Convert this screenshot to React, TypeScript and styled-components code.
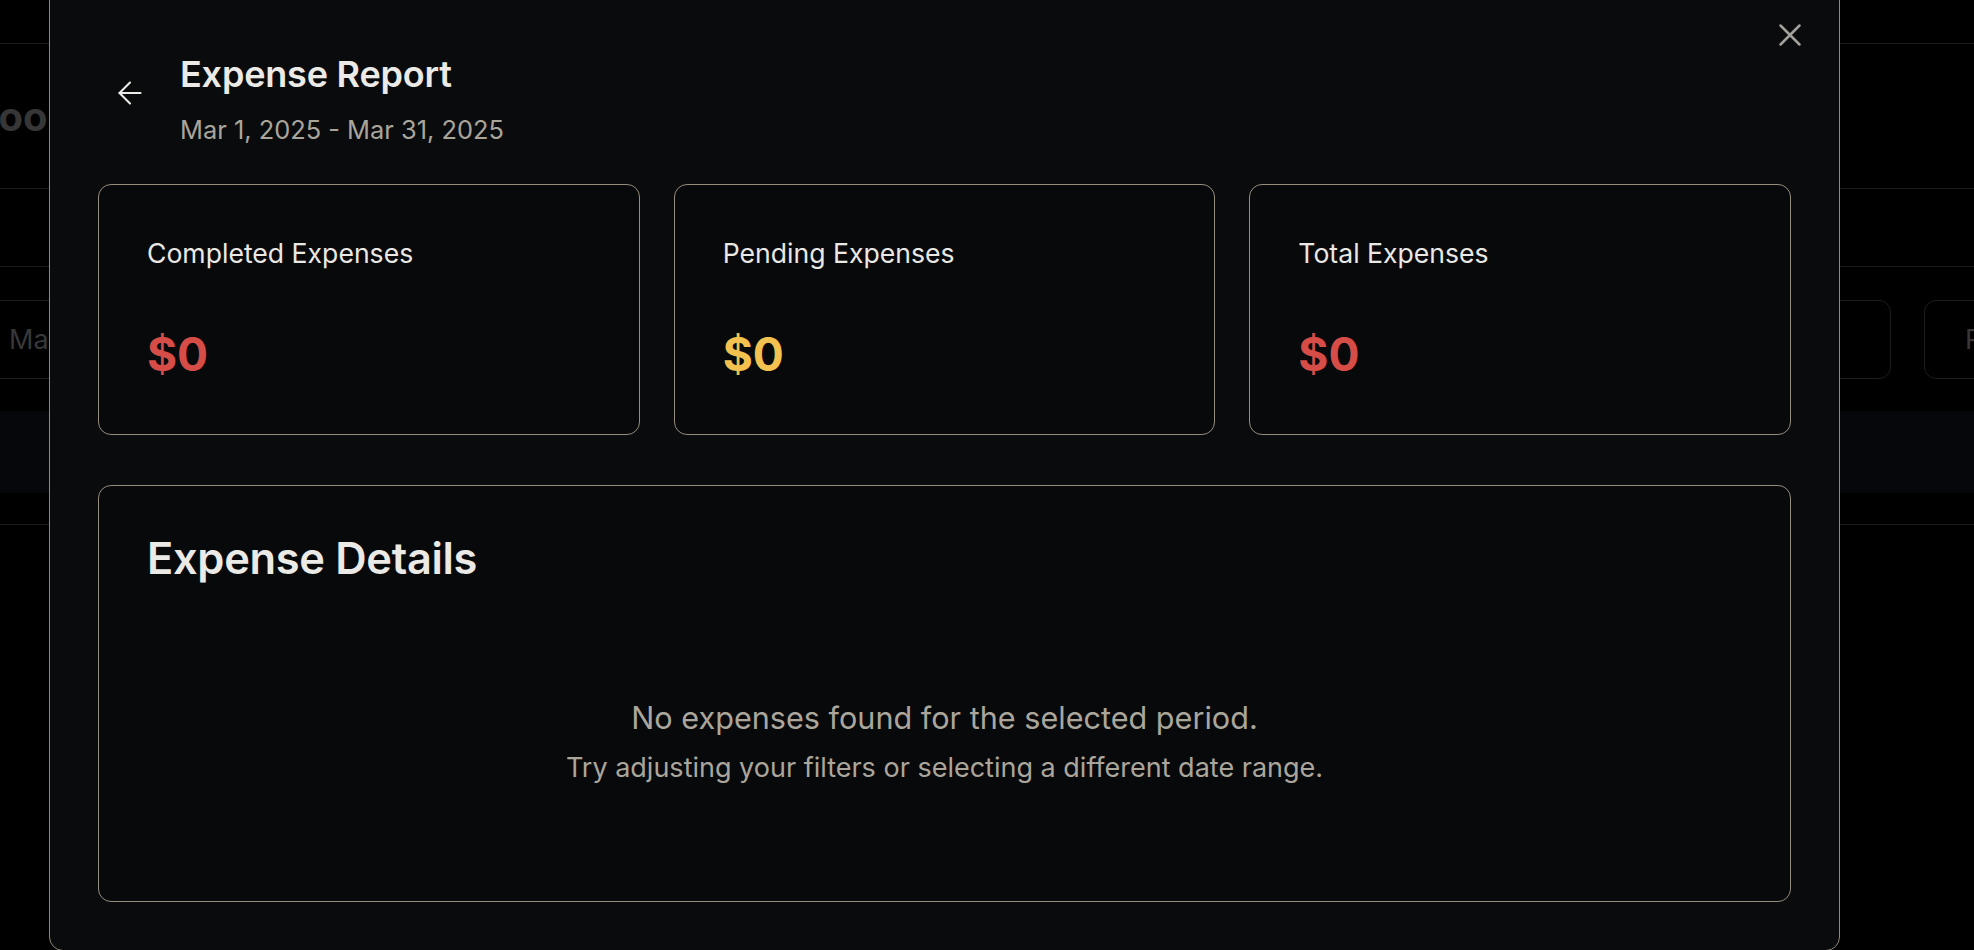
import React from "react";
import styled, { createGlobalStyle } from "styled-components";
import { ArrowLeft, X } from "lucide-react";

const GlobalStyle = createGlobalStyle`
  html, body {
    margin: 0;
    padding: 0;
    background: #000;
    height: 100%;
    overflow: hidden;
  }
  body {
    font-family: Inter, "Noto Sans", sans-serif;
    -webkit-font-smoothing: antialiased;
  }
  * { box-sizing: border-box; }
`;

/* ---------- dimmed page behind the dialog ---------- */

const Page = styled.div`
  width: 1974px;
  height: 950px;
  overflow: hidden;
  display: flex;
  flex-direction: column;
  background: #000;
`;

const NavBar = styled.div`
  height: 44px;
  flex-shrink: 0;
  border-bottom: 1px solid #1b1b19;
`;

const PageHeader = styled.div`
  height: 145px;
  flex-shrink: 0;
  display: flex;
  align-items: center;
  border-bottom: 1px solid #1b1b19;
  overflow: hidden;
`;

const PageTitle = styled.h1`
  margin: 0 0 0 -28px;
  font-size: 40px;
  font-weight: 700;
  color: #363636;
  white-space: nowrap;
`;

const TabsRow = styled.div`
  height: 78px;
  flex-shrink: 0;
  border-bottom: 1px solid #1b1b19;
`;

const FilterRow = styled.div`
  flex-shrink: 0;
  width: 2144px;
  display: flex;
  align-items: center;
  gap: 33px;
  padding: 33px 0 32px 0;
  margin-left: -20px;
`;

const FilterBox = styled.div<{ $w: number; $pad?: number }>`
  width: ${(p) => p.$w}px;
  height: 79px;
  flex-shrink: 0;
  border: 1px solid #1d1d1b;
  border-radius: 12px;
  display: flex;
  align-items: center;
  padding-left: ${(p) => p.$pad ?? 28}px;
  font-size: 27px;
  color: #383838;
  white-space: nowrap;
`;

const FilterSpacer = styled.div`
  flex: 1;
`;

const TableHead = styled.div`
  height: 82px;
  flex-shrink: 0;
  background: #05070b;
`;

const TableRow = styled.div`
  height: 32px;
  flex-shrink: 0;
  border-bottom: 1px solid #1b1b19;
`;

/* ---------- dialog ---------- */

const Dialog = styled.div`
  position: fixed;
  left: 49px;
  top: -16px;
  width: 1791px;
  height: 967px;
  background: #0a0b0d;
  border: 1px solid #908979;
  border-radius: 14px;
  padding: 69px 48px 48px 48px;
  display: flex;
  flex-direction: column;
`;

const CloseButton = styled.button`
  position: absolute;
  top: 31px;
  right: 30px;
  width: 38px;
  height: 38px;
  padding: 0;
  border: none;
  background: transparent;
  color: #a3a19c;
  display: flex;
  align-items: center;
  justify-content: center;
  cursor: pointer;
`;

const Header = styled.div`
  display: flex;
  align-items: flex-start;
  gap: 18px;
  margin-bottom: 36px;
`;

const BackButton = styled.button`
  width: 64px;
  height: 64px;
  margin-top: 7px;
  padding: 0;
  border: none;
  border-radius: 10px;
  background: transparent;
  color: #ecebe7;
  display: flex;
  align-items: center;
  justify-content: center;
  cursor: pointer;
`;

const TitleBlock = styled.div`
  display: flex;
  flex-direction: column;
`;

const Title = styled.h2`
  margin: 0;
  font-size: 36px;
  line-height: 40px;
  font-weight: 600;
  letter-spacing: -0.2px;
  color: #ebeae6;
`;

const DateRange = styled.p`
  margin: 18px 0 0 0;
  font-size: 25.4px;
  line-height: 36px;
  color: #a9a59b;
`;

const StatGrid = styled.div`
  display: grid;
  grid-template-columns: repeat(3, 1fr);
  gap: 34px;
  margin-bottom: 50px;
`;

const Card = styled.div`
  border: 1px solid #948c7e;
  border-radius: 13px;
  background: #08090b;
`;

const StatCard = styled(Card)`
  padding: 48px 48px 57px 48px;
  display: flex;
  flex-direction: column;
`;

const StatLabel = styled.div`
  font-size: 26.6px;
  line-height: 40px;
  color: #e9e8e4;
`;

const StatValue = styled.div<{ $tone: "red" | "yellow" }>`
  margin-top: 58px;
  font-size: 46px;
  line-height: 46px;
  font-weight: 700;
  color: ${(p) => (p.$tone === "red" ? "#d64d47" : "#f2c14f")};
`;

const DetailsCard = styled(Card)`
  flex: 1;
  padding: 48px 48px 117px 48px;
  display: flex;
  flex-direction: column;
`;

const DetailsTitle = styled.h3`
  margin: 0;
  font-size: 43.4px;
  line-height: 48px;
  font-weight: 600;
  letter-spacing: -0.3px;
  color: #ebeae6;
`;

const EmptyState = styled.div`
  margin-top: 116px;
  display: flex;
  flex-direction: column;
  align-items: center;
  gap: 14px;
  text-align: center;
`;

const EmptyMain = styled.p`
  margin: 0;
  font-size: 30.6px;
  line-height: 40px;
  color: #aba69c;
`;

const EmptySub = styled.p`
  margin: 0;
  font-size: 27px;
  line-height: 32px;
  color: #aba69c;
`;

const stats: { label: string; value: string; tone: "red" | "yellow" }[] = [
  { label: "Completed Expenses", value: "$0", tone: "red" },
  { label: "Pending Expenses", value: "$0", tone: "yellow" },
  { label: "Total Expenses", value: "$0", tone: "red" },
];

export default function App() {
  return (
    <>
      <GlobalStyle />
      <Page>
        <NavBar />
        <PageHeader>
          <PageTitle>Bookkeeping Reports</PageTitle>
        </PageHeader>
        <TabsRow />
        <FilterRow>
          <FilterBox $w={420}>Mar 1, 2025 - Mar 31, 2025</FilterBox>
          <FilterSpacer />
          <FilterBox $w={220} />
          <FilterBox $w={200} $pad={40}>Reset</FilterBox>
        </FilterRow>
        <TableHead />
        <TableRow />
      </Page>

      <Dialog role="dialog" aria-label="Expense Report">
        <CloseButton aria-label="Close">
          <X size={38} strokeWidth={1.6} />
        </CloseButton>

        <Header>
          <BackButton aria-label="Back">
            <ArrowLeft size={36} strokeWidth={1.4} />
          </BackButton>
          <TitleBlock>
            <Title>Expense Report</Title>
            <DateRange>Mar 1, 2025 - Mar 31, 2025</DateRange>
          </TitleBlock>
        </Header>

        <StatGrid>
          {stats.map((s) => (
            <StatCard key={s.label}>
              <StatLabel>{s.label}</StatLabel>
              <StatValue $tone={s.tone}>{s.value}</StatValue>
            </StatCard>
          ))}
        </StatGrid>

        <DetailsCard>
          <DetailsTitle>Expense Details</DetailsTitle>
          <EmptyState>
            <EmptyMain>No expenses found for the selected period.</EmptyMain>
            <EmptySub>Try adjusting your filters or selecting a different date range.</EmptySub>
          </EmptyState>
        </DetailsCard>
      </Dialog>
    </>
  );
}
